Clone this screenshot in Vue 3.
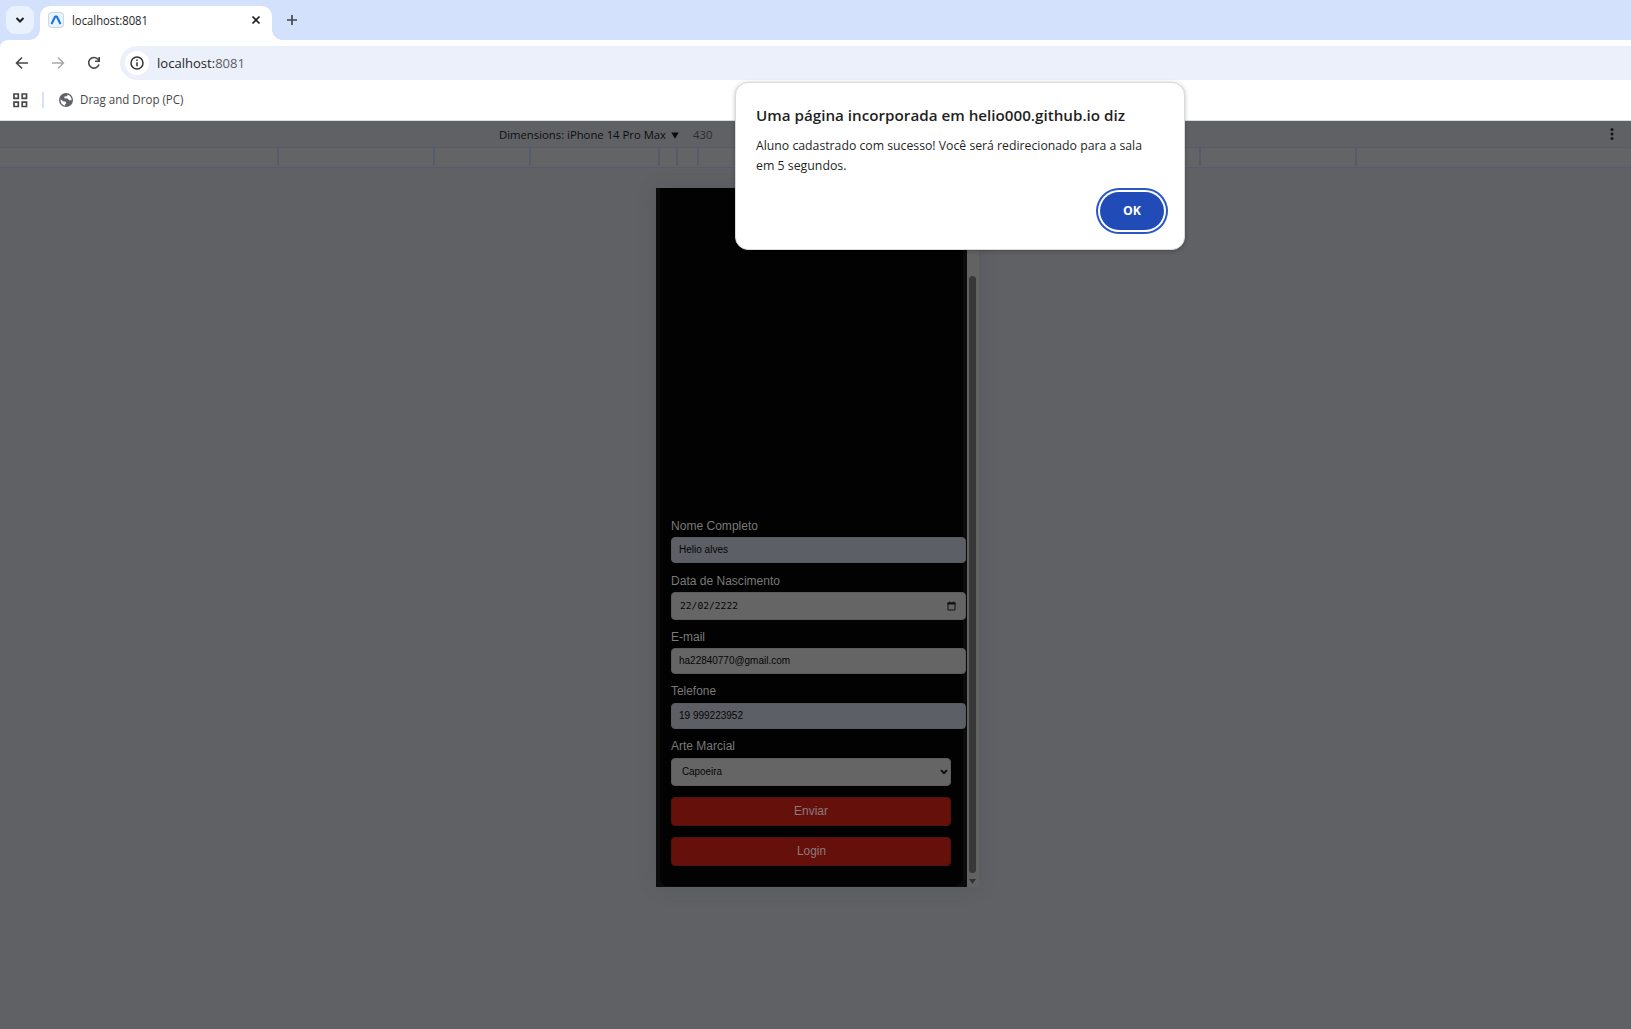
<script setup>
import { h } from 'vue'

// Single line of text set to a fixed advance width.
const Line = (p) =>
  h('svg', { width: p.w, height: p.size * 1.5, class: 'line', style: { overflow: 'visible', display: 'block', flex: 'none' } }, [
    h('text', {
      x: 0, y: p.size * 1.1, textLength: p.w, lengthAdjust: 'spacingAndGlyphs',
      fill: p.color, 'font-size': p.size, 'font-weight': p.weight || 400,
      'font-family': p.font || '"Open Sans", "Noto Sans", sans-serif'
    }, p.muted ? [p.t, h('tspan', { fill: '#5a5e66' }, p.muted)] : p.t)
  ])
Line.props = ['t', 'w', 'size', 'color', 'weight', 'font', 'muted']

const sans = '"Liberation Sans", Arial, sans-serif'
const mono = '"DejaVu Sans Mono", "Liberation Mono", monospace'
const segments = [278, 156, 96, 129, 18, 21, 502, 156]
const fields = [
  { label: 'Nome Completo', lw: 87, value: 'Helio alves', vw: 49, kind: 'filled', height: 26, gap: 9 },
  { label: 'Data de Nascimento', lw: 109, value: '22/02/2222', vw: 58, kind: 'date', height: 28, gap: 8 },
  { label: 'E-mail', lw: 34, value: 'ha22840770@gmail.com', vw: 111, kind: 'plain', height: 26, gap: 8 },
  { label: 'Telefone', lw: 45, value: '19 999223952', vw: 64, kind: 'filled', height: 26.5, gap: 8.2 },
  { label: 'Arte Marcial', lw: 64, value: 'Capoeira', vw: 40, kind: 'select', height: 28, gap: 0 }
]
</script>

<template>
  <div class="browser">
    <header class="tabs">
      <div class="tab-search">
        <svg width="10" height="8" viewBox="0 0 10 8"><path d="M1.500 2 5 5.500 8.500 2" fill="none" stroke="#1f1f1f" stroke-width="2" /></svg>
      </div>
      <div class="tab">
        <svg class="favicon" width="16" height="16" viewBox="0 0 16 16">
          <rect x=".5" y=".5" width="15" height="15" rx="3" fill="#e6f4fe" stroke="#c3cdd5" stroke-width=".8" />
          <path d="M3.500 12 7.200 4.500h1.600l3.700 7.500" fill="none" stroke="#1b6ee0" stroke-width="2" stroke-linejoin="round" />
        </svg>
        <Line class="tab-title" t="localhost:8081" :w="76" :size="12" color="#1f1f1f" />
        <svg class="close" width="10" height="10" viewBox="0 0 10 10"><path d="m1.500 1.500 7 7m0-7-7 7" stroke="#1f1f1f" stroke-width="1.700" /></svg>
      </div>
      <svg class="plus" width="12" height="12" viewBox="0 0 12 12"><path d="M6 1v10M1 6h10" stroke="#474747" stroke-width="1.700" /></svg>
    </header>

    <div class="toolbar">
      <svg width="14" height="14" viewBox="0 0 14 14"><path d="M13 7H2m5-5.500L1.500 7 7 12.500" fill="none" stroke="#474747" stroke-width="1.600" /></svg>
      <svg width="14" height="14" viewBox="0 0 14 14"><path d="M1 7h11M7 1.500 12.500 7 7 12.500" fill="none" stroke="#a9a9a9" stroke-width="1.500" /></svg>
      <svg width="14" height="14" viewBox="0 0 14 14"><path d="M12 8.500A5.300 5.300 0 1 1 11.200 3.600L12 4.500M12.200 1v4.200H8" fill="none" stroke="#474747" stroke-width="1.600" /></svg>
      <div class="omnibox">
        <div class="info">
          <svg width="14" height="14" viewBox="0 0 14 14"><circle cx="7" cy="7" r="6" fill="none" stroke="#333" stroke-width="1.500" /><path d="M7 6.200v4M7 3.500v1.600" stroke="#333" stroke-width="1.500" /></svg>
        </div>
        <Line t="localhost:" muted="8081" :w="88" :size="13.500" color="#1f1f1f" />
      </div>
    </div>

    <div class="bookmarks">
      <svg width="15" height="15" viewBox="0 0 15 15" fill="none" stroke="#474747" stroke-width="1.700"><path d="M1 1h4.300v4.300H1zM9.200 1h4.300v4.300H9.200zM1 9.200h4.300v4.300H1zM9.200 9.200h4.300v4.300H9.200z" /></svg>
      <i class="sep"></i>
      <svg width="14" height="14" viewBox="0 0 14 14"><circle cx="7" cy="7" r="7" fill="#5f6368" /><path d="M1.500 6.300 4 8.300l2.800.4.500 1.800-1.300.6.200 1.700A5.600 5.600 0 0 1 1.500 6.300zM8.600 1.700 7.900 3.200 5.500 3.600 5.300 5.200l3.200.3 1.600 1.800h2.500A5.600 5.600 0 0 0 8.600 1.700z" fill="#fff" /></svg>
      <Line t="Drag and Drop (PC)" :w="103.500" :size="12" color="#474747" />
    </div>

    <main class="content">
      <div class="device-bar">
        <Line t="Dimensions: iPhone 14 Pro Max" :w="167" :size="11.500" color="#0c0d0e" />
        <svg class="caret" width="8" height="7" viewBox="0 0 8 7"><path d="M.3.5h7.400L4 6.700z" fill="#0c0c0c" /></svg>
        <div class="size"><Line t="430" :w="19.500" :size="11.500" color="#2b2c2e" /></div>
        <svg class="kebab" width="4" height="14" viewBox="0 0 4 14" fill="#151515"><circle cx="2" cy="2.500" r="1.500" /><circle cx="2" cy="7" r="1.500" /><circle cx="2" cy="11.500" r="1.500" /></svg>
      </div>
      <div class="ruler"><i v-for="(s, i) in segments" :key="i" :style="{ width: s + 'px' }"></i></div>

      <div class="device">
        <div class="page">
          <form class="form">
            <template v-for="f in fields" :key="f.label">
              <Line class="label" :t="f.label" :w="f.lw" :size="12" color="#797979" :font="sans" />
              <div class="field" :class="f.kind" :style="{ height: f.height + 'px', marginBottom: f.gap + 'px' }">
                <Line :t="f.value" :w="f.vw" :size="f.kind === 'date' ? 9 : 10" color="#050505" :font="f.kind === 'date' ? mono : sans" />
                <svg v-if="f.kind === 'date'" width="9" height="10" viewBox="0 0 9 10"><path d="M1 2h7v7H1z" fill="none" stroke="#101010" /><path d="M.5 1.500h8v2h-8zM2 .5h1v1H2zM6 .5h1v1H6z" fill="#101010" /></svg>
                <svg v-if="f.kind === 'select'" width="8" height="6" viewBox="0 0 8 6"><path d="m1 1.200 3 3 3-3" fill="none" stroke="#080808" stroke-width="1.700" /></svg>
              </div>
            </template>
            <div class="action"><Line t="Enviar" :w="34" :size="12" color="#8b7b79" :font="sans" /></div>
            <div class="action"><Line t="Login" :w="29" :size="12" color="#8b7b79" :font="sans" /></div>
          </form>
        </div>
        <div class="scrollbar">
          <i class="thumb"></i>
          <svg width="7" height="5" viewBox="0 0 7 5"><path d="M0 0h7L3.500 5z" fill="#333" /></svg>
        </div>
      </div>
    </main>

    <div class="dialog" role="alertdialog">
      <Line t="Uma página incorporada em helio000.github.io diz" :w="369" :size="15" :weight="600" color="#1f1f1f" />
      <div class="message">
        <Line t="Aluno cadastrado com sucesso! Você será redirecionado para a sala" :w="386" :size="12.500" color="#1f1f1f" />
        <Line t="em 5 segundos." :w="90.500" :size="12.500" color="#1f1f1f" />
      </div>
      <div class="ok"><Line t="OK" :w="18" :size="12" :weight="700" color="#fff" /></div>
    </div>
  </div>
</template>

<style>
body { margin: 0; overflow: hidden; }
</style>

<style scoped>
.browser { position: relative; width: 1631px; height: 1029px; overflow: hidden; display: flex; flex-direction: column; background: #d3e1fc; }
svg { flex: none; }
.tabs { height: 40px; display: flex; align-items: flex-start; flex: none; }
.tab-search { width: 28px; height: 28px; margin: 6px 6px 0; border-radius: 9px; background: #e9f1fd; display: flex; align-items: center; justify-content: center; }
.tab { position: relative; width: 232px; height: 34px; box-sizing: border-box; margin-top: 6px; padding: 0 11px 6px 8px; border-radius: 10px 10px 0 0; background: #fff; display: flex; align-items: center; }
.tab::before, .tab::after { content: ''; position: absolute; bottom: 0; width: 10px; height: 10px; }
.tab::before { left: -10px; background: radial-gradient(circle at 0 0, transparent 9.500px, #fff 10px); }
.tab::after { right: -10px; background: radial-gradient(circle at 100% 0, transparent 9.500px, #fff 10px); }
.favicon { margin-right: 8px; }
.tab-title { margin-top: 2px; }
.close { margin-left: auto; }
.plus { margin: 14px 0 0 14px; }
.toolbar { height: 46px; flex: none; display: flex; align-items: center; background: #fff; border-top-left-radius: 8px; padding-left: 15px; gap: 22px; }
.omnibox { flex: 1; height: 34px; margin-left: -3px; border-radius: 17px 0 0 17px; background: #ecf0fa; display: flex; align-items: center; }
.info { width: 24px; height: 24px; margin: 0 8px 0 5px; border-radius: 50%; background: #fff; display: flex; align-items: center; justify-content: center; }
.bookmarks { height: 35px; flex: none; box-sizing: border-box; padding: 0 0 6px 13px; background: #fff; border-bottom: 1px solid #d9dddd; display: flex; align-items: center; }
.sep { width: 2px; height: 16px; margin: 0 15px 0 14px; background: #d3e1fc; }
.bookmarks svg:nth-of-type(2) { margin-right: 7px; }
.content { flex: 1; background: #606165; display: flex; flex-direction: column; }
.device-bar { height: 26px; flex: none; display: flex; align-items: center; padding: 0 17px 0 499px; }
.device-bar .line { margin-top: 1px; }
.caret { margin: 2px 14px 0 5px; }
.kebab { margin-left: auto; }
.ruler { height: 19px; flex: none; display: flex; background: #636465; border-top: 1px solid #575b6b; border-bottom: 1px solid #575b6b; padding-left: 1px; }
.ruler i { height: 18px; box-sizing: border-box; border-right: 2px solid #555b69; flex: none; }
.device { width: 323px; height: 699px; margin: 20px 0 0 656px; display: flex; box-shadow: 0 0 18px rgba(60, 60, 68, .2); }
.page { width: 311px; box-sizing: border-box; padding: 0 4px 0 4px; background: #0b0b0b; }
.form { height: 698px; box-sizing: border-box; padding: 328.500px 0 0 11.400px; background: #020202; border-radius: 0 0 8px 8px; display: flex; flex-direction: column; }
.label { margin-bottom: 2.300px; }
.field { width: 295px; flex: none; box-sizing: border-box; border: 1px solid #5b5b5b; border-radius: 4px; background: #656565; padding: 0 9px 0 7px; display: flex; align-items: center; justify-content: space-between; }
.filled { background: #5c5f65; border-color: #575a60; }
.date { padding-left: 8px; }
.select { width: 280px; padding: 0 2px 0 9.500px; }
.field .line { margin-bottom: 1px; }
.action { width: 280px; height: 29px; margin-top: 11px; flex: none; box-sizing: border-box; border: 1px solid #56100c; border-radius: 4px; background: #66100c; display: flex; align-items: center; justify-content: center; }
.action .line { margin-bottom: 1px; }
.scrollbar { width: 12px; box-sizing: border-box; padding-right: 1px; background: #626262; display: flex; flex-direction: column; align-items: center; }
.thumb { width: 7px; height: 597px; margin: 88px 0 6px; border-radius: 4px; background: #383838; }
.dialog { position: absolute; left: 735px; top: 82px; width: 450px; height: 168px; box-sizing: border-box; border: 1px solid #d8dadd; border-radius: 13px; background: #fff; padding: 21px 20px 0; box-shadow: 0 1px 4px rgba(0, 0, 0, .25); display: flex; flex-direction: column; }
.message { margin-top: 9px; display: flex; flex-direction: column; gap: 1.250px; }
.ok { width: 64px; height: 38px; flex: none; margin: 17.500px 0 0 344px; border-radius: 19px; background: #214bb7; box-shadow: 0 0 0 2px #fff, 0 0 0 4px #2857c9; display: flex; align-items: center; justify-content: center; }
</style>
